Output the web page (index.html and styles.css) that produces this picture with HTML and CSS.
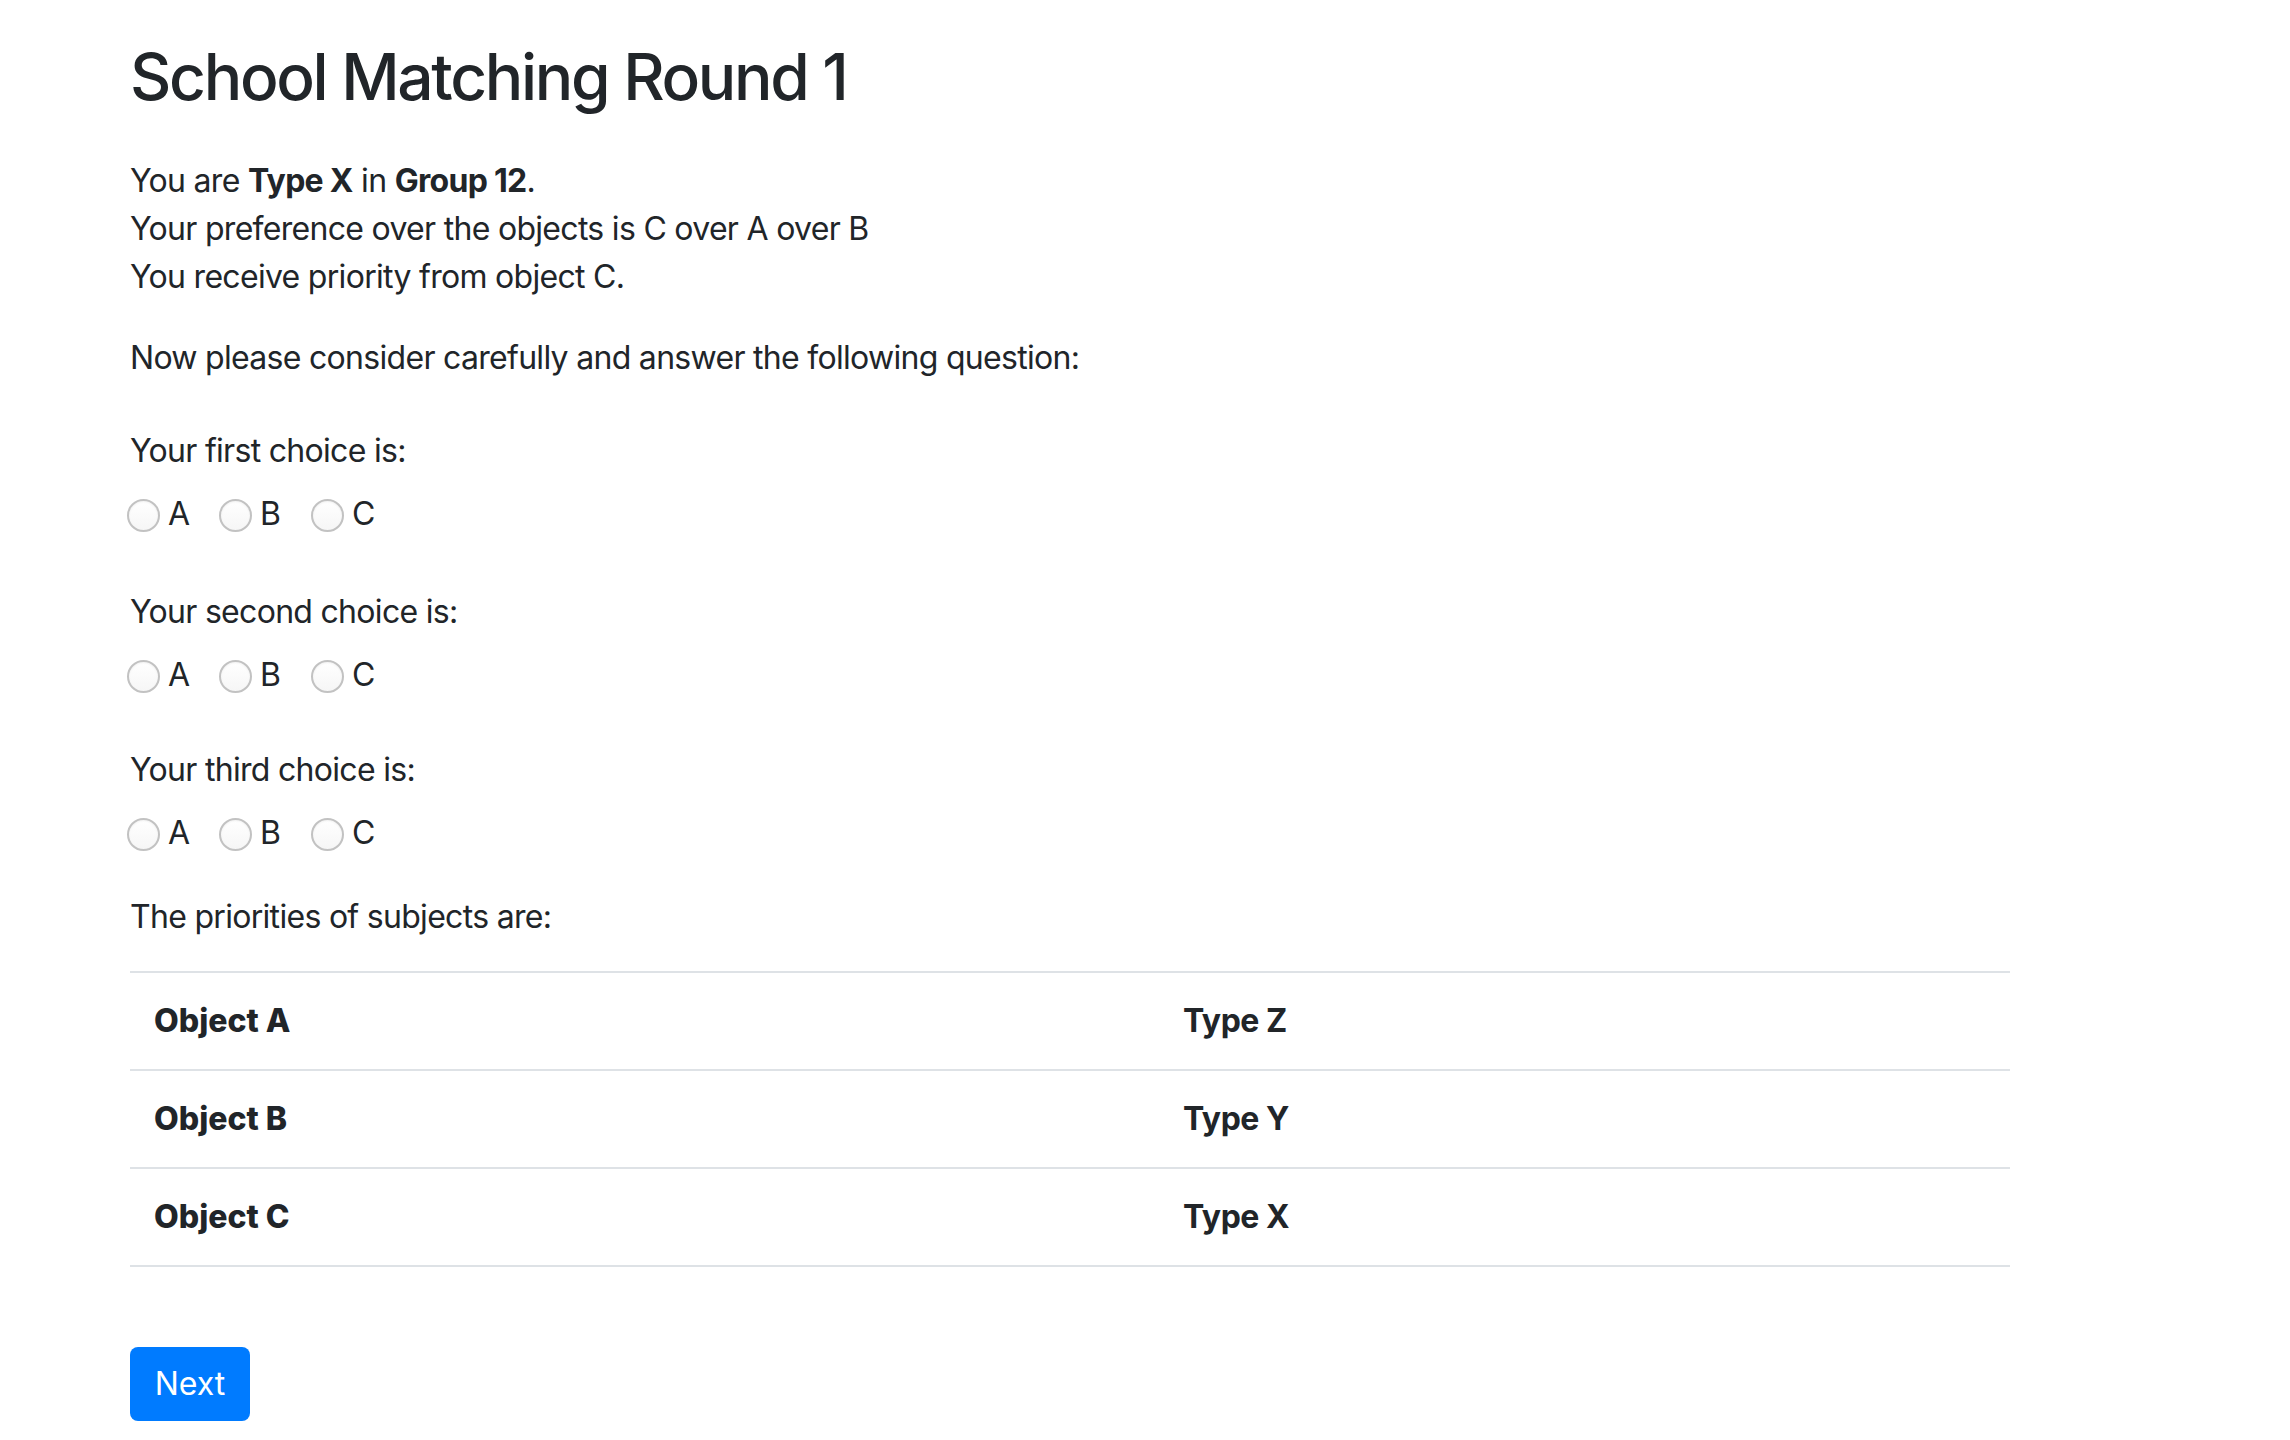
FILE: index.html
```html
<!DOCTYPE html>
<html lang="en">
<head>
<meta charset="utf-8">
<title>School Matching Round 1</title>
<link rel="stylesheet" href="styles.css">
</head>
<body>
<main class="page">
  <h2 class="title">School Matching Round 1</h2>

  <p class="intro">
    You are <strong>Type X</strong> in <strong>Group 12</strong>.<br>
    Your preference over the objects is C over A over B<br>
    You receive priority from object C.
  </p>

  <p class="prompt">Now please consider carefully and answer the following question:</p>

  <div class="question q1">
    <label class="q-label">Your first choice is:</label>
    <div class="options">
      <label class="opt"><input type="radio" name="c1" value="A"><span>A</span></label>
      <label class="opt"><input type="radio" name="c1" value="B"><span>B</span></label>
      <label class="opt"><input type="radio" name="c1" value="C"><span>C</span></label>
    </div>
  </div>

  <div class="question q2">
    <label class="q-label">Your second choice is:</label>
    <div class="options">
      <label class="opt"><input type="radio" name="c2" value="A"><span>A</span></label>
      <label class="opt"><input type="radio" name="c2" value="B"><span>B</span></label>
      <label class="opt"><input type="radio" name="c2" value="C"><span>C</span></label>
    </div>
  </div>

  <div class="question">
    <label class="q-label">Your third choice is:</label>
    <div class="options">
      <label class="opt"><input type="radio" name="c3" value="A"><span>A</span></label>
      <label class="opt"><input type="radio" name="c3" value="B"><span>B</span></label>
      <label class="opt"><input type="radio" name="c3" value="C"><span>C</span></label>
    </div>
  </div>

  <p class="priorities">The priorities of subjects are:</p>

  <table class="prio-table">
    <colgroup><col class="col-obj"><col class="col-type"></colgroup>
    <tbody>
      <tr><th>Object A</th><td>Type Z</td></tr>
      <tr><th>Object B</th><td>Type Y</td></tr>
      <tr><th>Object C</th><td>Type X</td></tr>
    </tbody>
  </table>

  <button class="btn-next" type="button">Next</button>
</main>
</body>
</html>
```

FILE: styles.css
```css
html, body {
  margin: 0;
  padding: 0;
  background: #ffffff;
}

body {
  font-family: Inter, "Liberation Sans", Arial, sans-serif;
  font-size: 32px;
  line-height: 48px;
  color: #212529;
}

.page {
  width: 1880px;
  margin-left: 130px;
  padding-top: 38px;
  padding-bottom: 20px;
}

.title {
  margin: 0;
  font-size: 64px;
  line-height: 77px;
  font-weight: 500;
  letter-spacing: -2.3px;
}

.intro,
.prompt,
.q-label,
.priorities {
  letter-spacing: -0.7px;
}

.intro {
  margin: 42px 0 0;
}

.intro strong {
  font-weight: 700;
}

.prompt {
  margin: 33px 0 0;
}

.question {
  margin-top: 47px;
}

.q1 {
  margin-top: 45px;
}

.q2 {
  margin-top: 50px;
}

.q-label {
  display: block;
}

.options {
  display: flex;
  align-items: center;
  margin-top: 15px;
  height: 48px;
}

.opt {
  display: flex;
  align-items: center;
  margin-right: 32px;
}

.opt span {
  min-width: 22px;
}

.opt input {
  appearance: none;
  -webkit-appearance: none;
  width: 33px;
  height: 33px;
  margin: 2px 8px 0 -3px;
  border-radius: 50%;
  border: 2px solid #c2c2c2;
  background: linear-gradient(#ffffff, #f6f6f6);
  box-shadow: inset 0 1px 2px rgba(0, 0, 0, 0.06);
  box-sizing: border-box;
}

.priorities {
  margin: 36px 0 0;
}

.prio-table {
  width: 1880px;
  margin-top: 30px;
  border-collapse: collapse;
}

.col-obj {
  width: 1029px;
}

.prio-table th,
.prio-table td {
  padding: 24px;
  text-align: left;
  font-weight: 700;
  border-top: 2px solid #dee2e6;
  border-bottom: 2px solid #dee2e6;
  vertical-align: top;
}

.prio-table th {
  font-weight: 800;
}

.prio-table td {
  letter-spacing: -0.5px;
}

.btn-next {
  display: block;
  margin-top: 80px;
  width: 120px;
  height: 74px;
  padding: 0;
  border: none;
  border-radius: 8px;
  background: #007bff;
  color: #ffffff;
  font-family: Inter, "Liberation Sans", Arial, sans-serif;
  font-size: 32px;
  line-height: 74px;
  text-align: center;
}
```
